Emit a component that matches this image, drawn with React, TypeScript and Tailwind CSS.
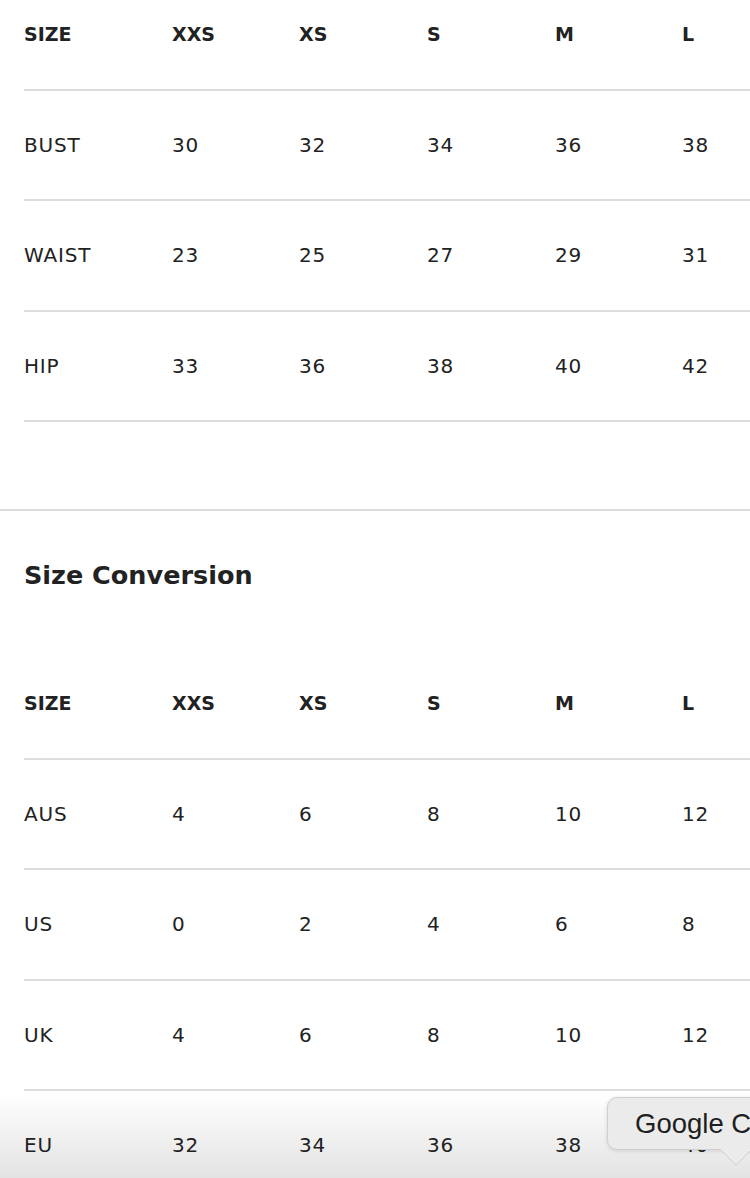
import React from 'react';

const font = { fontFamily: '"DejaVu Sans", sans-serif' };

const measurements = {
  head: ['SIZE', 'XXS', 'XS', 'S', 'M', 'L'],
  rows: [
    ['BUST', '30', '32', '34', '36', '38'],
    ['WAIST', '23', '25', '27', '29', '31'],
    ['HIP', '33', '36', '38', '40', '42'],
  ],
};

const conversion = {
  head: ['SIZE', 'XXS', 'XS', 'S', 'M', 'L'],
  rows: [
    ['AUS', '4', '6', '8', '10', '12'],
    ['US', '0', '2', '4', '6', '8'],
    ['UK', '4', '6', '8', '10', '12'],
    ['EU', '32', '34', '36', '38', '40'],
  ],
};

const widths = ['w-[148px]', 'w-[127px]', 'w-[128px]', 'w-[128px]', 'w-[127px]', 'w-[60px]'];

function Row({ cells, head }: { cells: string[]; head?: boolean }) {
  return (
    <div className="flex h-[110.5px] w-[900px] items-center border-b-2 border-[#dddddd]">
      {cells.map((c, i) => (
        <div
          key={i}
          className={`${widths[i]} shrink-0 text-[#222222] ${
            head ? 'text-[19px] font-bold' : 'text-[20px] font-normal tracking-[0.8px]'
          }`}
        >
          {c}
        </div>
      ))}
    </div>
  );
}

function SizeTable({ data }: { data: { head: string[]; rows: string[][] } }) {
  return (
    <div className="pl-[24px]">
      <Row cells={data.head} head />
      {data.rows.map((r, i) => (
        <Row key={i} cells={r} />
      ))}
    </div>
  );
}

export default function App() {
  return (
    <div
      className="relative h-[1178px] w-[750px] overflow-hidden bg-[linear-gradient(to_bottom,#ffffff_1092px,#e3e3e3_1178px)]"
      style={font}
    >
      <div className="-mt-[20px]">
        <SizeTable data={measurements} />
      </div>

      <div className="mt-[87px] border-t-2 border-[#dddddd]" />

      <h2 className="mt-[47px] pl-[24px] text-[25.5px] font-bold leading-[34px] text-[#222222]">
        Size Conversion
      </h2>

      <div className="mt-[57px]">
        <SizeTable data={conversion} />
      </div>

      {/* tooltip */}
      <div className="absolute left-[607px] top-[1097px]">
        <div
          className="flex h-[53px] w-[220px] items-center whitespace-nowrap rounded-[10px] border border-[#cfcfcf] bg-[#ebebeb] pl-[27px] text-[27.5px] text-[#1e1e1e] shadow-[0_1px_4px_rgba(0,0,0,0.12)]"
          style={{ fontFamily: '"Liberation Sans", sans-serif' }}
        >
          Google Chrome
        </div>
        <svg className="absolute left-[112px] top-[51px]" width="34" height="19" viewBox="0 0 34 19">
          <path d="M1 1 L17 17 L33 1" fill="#ebebeb" stroke="#cfcfcf" strokeWidth="1" />
          <rect x="1.5" y="0" width="31" height="1.5" fill="#ebebeb" />
        </svg>
      </div>
    </div>
  );
}
